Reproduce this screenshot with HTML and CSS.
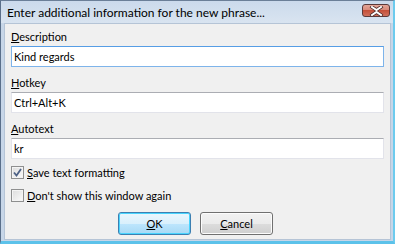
FILE: index.html
```html
<!DOCTYPE html>
<html>
<head>
<meta charset="utf-8">
<link rel="stylesheet" href="styles.css">
</head>
<body>
<div class="window">
  <div class="titlebar">
    <span class="title">Enter additional information for the new phrase...</span>
    <div class="close">
      <svg width="17" height="10" viewBox="0 0 17 10">
        <path d="M4 1 L8.5 4 L13 1 M4 9 L8.5 6 L13 9" stroke="#4a2a2a" stroke-width="3.4" fill="none" stroke-linecap="square"/>
        <path d="M4 1 L8.5 4 L13 1 M4 9 L8.5 6 L13 9" stroke="#ffffff" stroke-width="2" fill="none" stroke-linecap="square"/>
      </svg>
    </div>
  </div>
  <div class="client">
    <div class="field">
      <div class="label"><u>D</u>escription</div>
      <div class="textbox focused">Kind regards</div>
    </div>
    <div class="field">
      <div class="label"><u>H</u>otkey</div>
      <div class="textbox">Ctrl+Alt+K</div>
    </div>
    <div class="field">
      <div class="label"><u>A</u>utotext</div>
      <div class="textbox">kr</div>
    </div>
    <div class="checks">
      <div class="check">
        <span class="box checked">
          <svg width="9" height="9" viewBox="0 0 9 9"><path d="M1 4.5 L3.5 7.5 L8 1" stroke="#4d6185" stroke-width="1.8" fill="none"/></svg>
        </span>
        <span><u>S</u>ave text formatting</span>
      </div>
      <div class="check">
        <span class="box"></span>
        <span><u>D</u>on't show this window again</span>
      </div>
    </div>
    <div class="buttons">
      <div class="btn default"><u>O</u>K</div>
      <div class="btn"><u>C</u>ancel</div>
    </div>
  </div>
</div>
</body>
</html>
```
FILE: styles.css
```css
* { box-sizing: border-box; }
html, body { margin: 0; padding: 0; }
body {
  width: 395px;
  height: 244px;
  overflow: hidden;
  font-family: Lato, "Noto Sans", sans-serif;
  font-size: 11px;
  color: #000;
  background: #6cc6e8;
}
.window {
  width: 395px;
  height: 244px;
  display: flex;
  flex-direction: column;
  background: #c7d6e8;
  border-left: 1px solid #5a6f8a;
  border-top: 1px solid #6b7f98;
  border-right: 2px solid #6ccbee;
  border-bottom: 3px solid #5cc2ea;
}
.titlebar {
  height: 22px;
  flex: none;
  display: flex;
  align-items: center;
  justify-content: space-between;
  padding: 0 3px 0 6px;
  background: linear-gradient(#cbdaec, #d9e4f0);
}
.title {
  font-size: 12px;
  color: #000;
}
.close {
  width: 28px;
  height: 13px;
  margin-top: -3px;
  border: 1px solid #5b3a3a;
  border-radius: 3px;
  background: linear-gradient(#e3a597 0%, #d98a7a 45%, #c55039 50%, #d0705c 100%);
  display: flex;
  align-items: center;
  justify-content: center;
}
.client {
  flex: 1;
  margin: 0 2px 1px 3px;
  background: #f0f0f0;
  border: 1px solid #b5c4d6;
  padding: 3px 6px 0 6px;
  display: flex;
  flex-direction: column;
}
.field { margin-bottom: 6px; }
.label {
  height: 19px;
  line-height: 19px;
}
.textbox {
  height: 21px;
  line-height: 17px;
  padding: 1px 2px;
  background: #fff;
  border: 1px solid #e2e3ea;
  border-top-color: #abadb3;
}
.textbox.focused {
  border-color: #7eb4ea;
  border-top-color: #569de5;
}
.checks { margin-top: -4px; }
.check {
  display: flex;
  align-items: center;
  height: 23px;
  gap: 3px;
}
.box {
  width: 13px;
  height: 13px;
  border: 1px solid #8e8f8f;
  background: linear-gradient(135deg, #dcdcdc, #fbfbfb);
  box-shadow: inset 0 0 0 1px #f4f4f4;
  display: flex;
  align-items: center;
  justify-content: center;
}
.buttons {
  display: flex;
  justify-content: center;
  gap: 9px;
  margin-top: 5px;
  padding-right: 4px;
}
.btn {
  width: 73px;
  height: 23px;
  border: 1px solid #707070;
  border-radius: 3px;
  background: linear-gradient(#f2f2f2 0%, #ebebeb 50%, #dddddd 50%, #cfcfcf 100%);
  box-shadow: inset 0 0 0 1px #fcfcfc;
  text-align: center;
  line-height: 21px;
}
.btn.default {
  border-color: #3c7fb1;
  background: linear-gradient(#eaf6fd 0%, #d9f0fc 50%, #bee6fd 50%, #a7d9f5 100%);
  box-shadow: inset 0 0 0 1px #48d4fe;
}
u { text-decoration: underline; text-underline-offset: 1px; }
```
